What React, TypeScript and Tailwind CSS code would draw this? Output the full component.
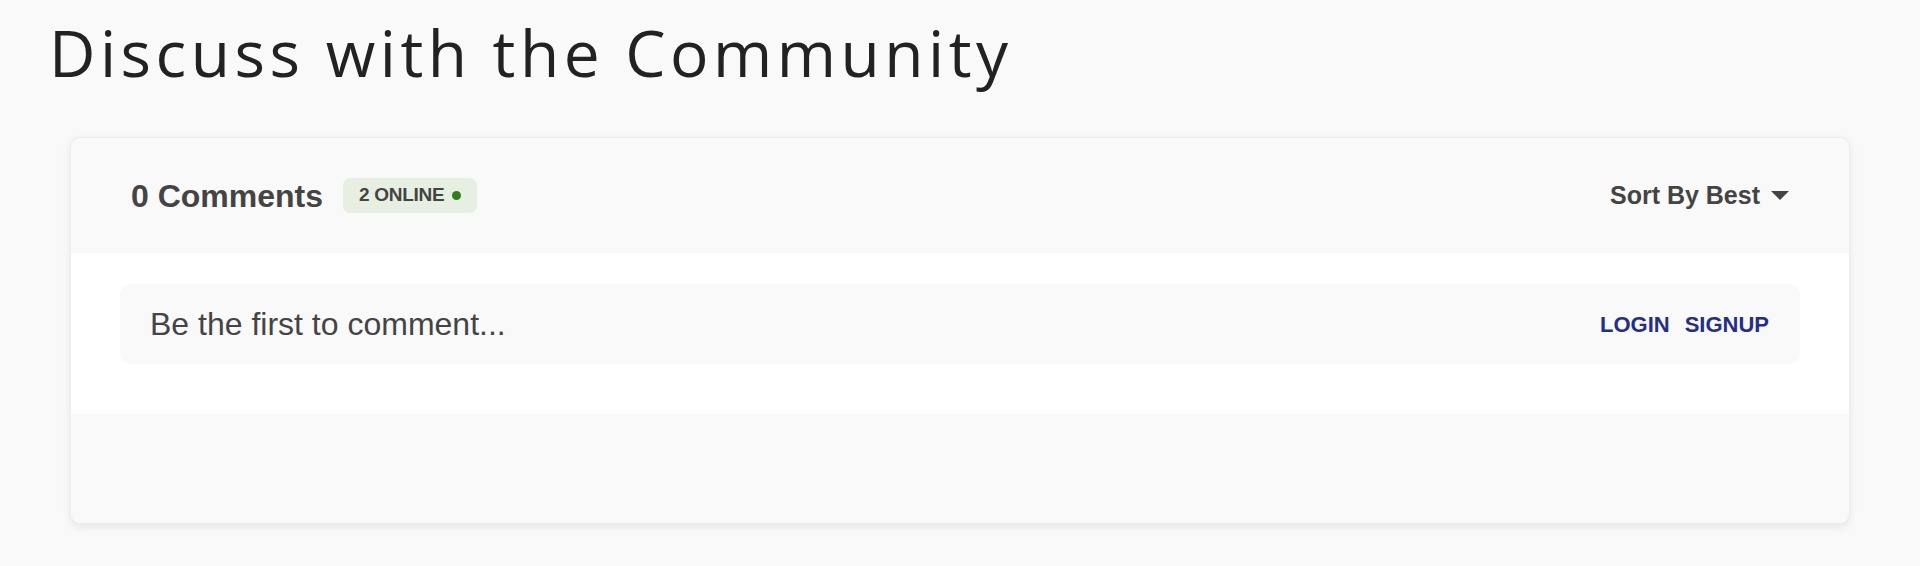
import React from 'react';

const CommentsCard: React.FC = () => {
    return (
        <div className="mx-[70px] mt-[52px] rounded-[10px] border border-[#ececec] bg-[#f9f9f9] shadow-[0_3px_8px_rgba(0,0,0,0.08)] overflow-hidden font-['Liberation_Sans',Arial,sans-serif]">
            <div className="h-[115px] px-[60px] flex items-center justify-between">
                <div className="flex items-center">
                    <h2 className="text-[32px] font-bold text-[#444]">0 Comments</h2>
                    <span className="ml-[20px] h-[35px] px-[16px] rounded-[7px] bg-[#e7efe2] flex items-center gap-[8px]">
                        <span className="text-[19px] font-bold text-[#444] tracking-[-0.3px]">2 ONLINE</span>
                        <span className="w-[9px] h-[9px] rounded-full bg-[#2f7d1e]"></span>
                    </span>
                </div>
                <button className="flex items-center gap-[11px] text-[25px] font-bold text-[#444]">
                    Sort By Best
                    <svg width="18" height="9" viewBox="0 0 18 9">
                        <polygon points="0,0 18,0 9,9" fill="#444" />
                    </svg>
                </button>
            </div>
            <div className="bg-white px-[49px] pt-[31px] pb-[50px]">
                <div className="h-[80px] rounded-[10px] bg-[#f9f9fa] pl-[30px] pr-[31px] flex items-center justify-between">
                    <p className="text-[32px] text-[#444]">Be the first to comment...</p>
                    <div className="flex items-center gap-[15px] text-[22px] font-bold text-[#252e87]">
                        <button>LOGIN</button>
                        <button>SIGNUP</button>
                    </div>
                </div>
            </div>
            <div className="h-[109px]"></div>
        </div>
    );
};

export default function App() {
    return (
        <div className="min-h-screen bg-[#f9f9f9] pt-[21px] pb-[40px]">
            <h1 className="pl-[49px] text-[64px] leading-none tracking-[4.5px] font-['Open_Sans',sans-serif] text-[#222]">
                Discuss with the Community
            </h1>
            <CommentsCard />
        </div>
    );
}
